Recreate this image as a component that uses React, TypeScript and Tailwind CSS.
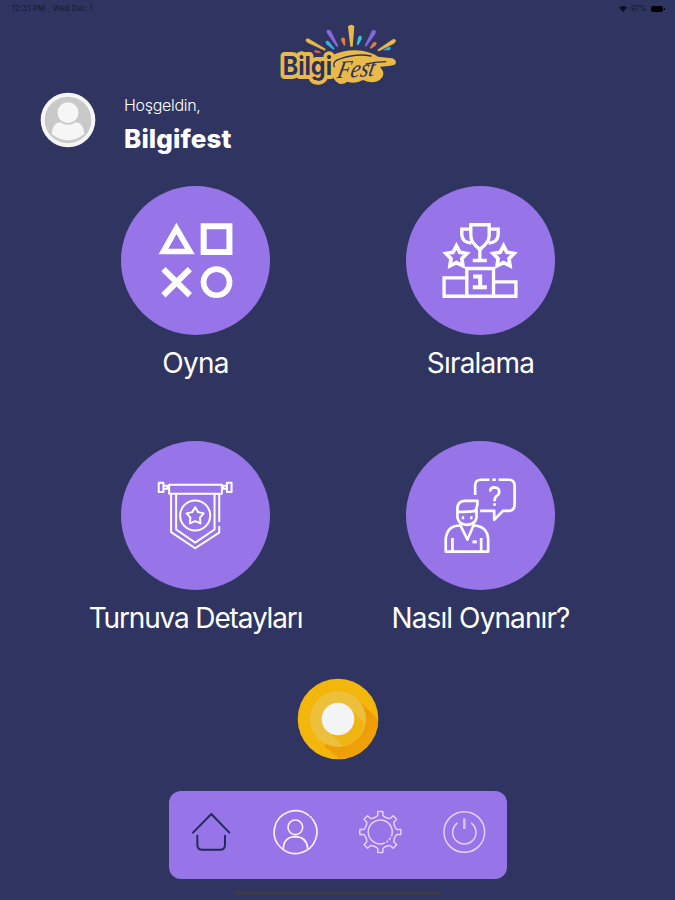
import type { ReactNode } from 'react';

const STAR = (cx: number, cy: number, outer: number, inner: number) =>
  Array.from({ length: 10 }, (_, i) => {
    const r = i % 2 === 0 ? outer : inner;
    const a = (Math.PI / 5) * i - Math.PI / 2;
    return `${(cx + r * Math.cos(a)).toFixed(1)},${(cy + r * Math.sin(a)).toFixed(1)}`;
  }).join(' ');

// Eight teeth, each one a flat top with slanted sides
const gearPath = (() => {
  const steps: [number, number][] = [[-16, 47], [-9, 50], [-7, 62], [7, 62], [9, 50], [16, 47]];
  const points: string[] = [];
  for (let t = 0; t < 8; t++) {
    for (const [deg, r] of steps) {
      const a = ((t * 45 + deg - 90) * Math.PI) / 180;
      points.push(`${(72 + r * Math.cos(a)).toFixed(1)} ${(72 + r * Math.sin(a)).toFixed(1)}`);
    }
  }
  return `M${points.join('L')}Z`;
})();

const Logo = () => (
  <svg className="h-[75px] w-[150px]" viewBox="0 0 450 225">
    {/* Fireworks */}
    <g>
      <path d="M123 76Q123 69 131 72L181 102L179 106L127 82Z" fill="#e9b949" stroke="#e9b949" strokeWidth="2" />
      <path d="M392 78Q391 70 383 74L338 105L341 108L387 85Z" fill="#e9b949" stroke="#e9b949" strokeWidth="2" />
      <path d="M249 34Q259 25 268 34L263 95H256Z" fill="#e9b949" />
      <path d="M184 48Q190 40 198 48L220 93L215 96L187 56Z" fill="#8667dc" />
      <path d="M333 48Q326 41 320 49L299 92L303 95L331 57Z" fill="#8667dc" />
      <path d="M181 80Q186 74 193 80L209 101L205 104L184 88Z" fill="#35aee2" />
      <path d="M290 64Q284 59 280 66L275 88L280 91L290 72Z" fill="#35c5d8" />
      <path d="M378 99Q374 94 366 98L354 106H374Z" fill="#35aee2" />
      <path d="M229 70Q235 64 240 71L241 91L237 92L229 77Z" fill="#e77b3b" />
      <path d="M335 83Q328 78 323 85L314 99L318 101L333 91Z" fill="#e77b3b" />
      <path d="M146 109Q151 102 163 109L169 115L153 113Z" fill="#db6546" />
    </g>
    <path
      d="M203 120Q240 102 292 107Q326 114 339 125L382 130Q397 136 391 148Q385 153 345 155Q366 179 344 195Q323 209 294 195Q271 208 247 200Q224 219 205 189Z"
      fill="#e9b949"
    />
    <text x="53" y="180" fontFamily="Inter, sans-serif" fontSize="75" fontWeight="700" textLength="148" lengthAdjust="spacingAndGlyphs"
      fill="#2b315f" stroke="#e9b949" strokeWidth="24" strokeLinejoin="round" paintOrder="stroke">Bilgi</text>
    <text transform="translate(214 190) rotate(-4) skewX(-16)" fontFamily="'Liberation Serif', serif" fontStyle="italic" fontSize="74"
      textLength="112" lengthAdjust="spacingAndGlyphs" fill="#2b315f">Fest</text>
    <path d="M208 155Q200 139 227 131Q276 114 318 123M304 147Q330 141 362 140" fill="none" stroke="#2b315f" strokeWidth="4" strokeLinecap="round" />
  </svg>
);

const PlayIcon = () => (
  <svg viewBox="19 18 446 446" className="size-full" fill="none" stroke="#fff">
    <path d="M185 145L225 214H146Z" strokeWidth="17" />
    <rect x="266.500" y="138.500" width="77" height="77" strokeWidth="18" />
    <path d="M146 267L225 345M225 267L146 345" strokeWidth="18" />
    <circle cx="305" cy="306" r="39" strokeWidth="17" />
  </svg>
);

const PodiumIcon = () => (
  <svg viewBox="19 18 446 446" className="size-full" fill="none" stroke="#fff" strokeWidth="10">
    <path d="M213 134H268V166Q268 188 240 207Q213 188 213 166Z" />
    <path d="M213 147H186V164Q187 187 215 189M268 147H295V164Q294 187 266 189" />
    <path d="M240 205V240M219 241H261" />
    <path d="M224 190L240 212L257 190" strokeWidth="7" />
    <polygon points={STAR(170, 230, 33, 17)} strokeWidth="11" />
    <polygon points={STAR(311, 230, 33, 17)} strokeWidth="11" />
    <path d="M201 265H281V348H201ZM201 293H133V348H201M281 305H348V348H281" />
    <path d="M220 289H241V320M219 321H261" strokeWidth="12" />
  </svg>
);

const BannerIcon = () => (
  <svg viewBox="124 18 446 446" className="size-full" fill="none" stroke="#fff" strokeWidth="6" strokeLinecap="round" strokeLinejoin="round">
    <path d="M268 149H426V176H268ZM300 176H405" />
    <path d="M237 143H251V171H237ZM441 143H455V171H441ZM251 152H263V161H251M441 152H430V161H441" />
    <path d="M274 177V291L346 339L418 292V275M418 258V177" />
    <path d="M289 177V283L346 322L404 283V177" />
    <circle cx="346" cy="241" r="45" />
    <polygon points={STAR(346, 243, 27, 15)} />
  </svg>
);

const HelpIcon = () => (
  <svg viewBox="78 18 446 446" className="size-full" fill="none" stroke="#fff" strokeWidth="8" strokeLinejoin="round">
    <path d="M285 180V150Q286 134 302 134H328M336 134H347M355 134H386Q403 135 403 151V210Q402 226 387 227H368L342 254V227H300" />
    <path d="M330 169Q330 157 343 157Q357 158 357 170Q357 178 350 182Q343 186 343 198M343 204V212" />
    <path d="M232 232V222Q231 198 254 197H292Q293 213 286 227Q270 230 250 230H232M232 230V247Q235 268 261 269Q287 267 289 247V224" />
    <path d="M245 248H252M270 248H277" strokeWidth="9" />
    <path d="M241 262V271Q202 270 197 310V349H324V312Q321 272 280 271V262M241 271L262 313L280 271" />
    <path d="M217 348V308M303 348V308" />
    <path d="M277 320H290" strokeWidth="9" />
  </svg>
);

const Coin = () => (
  <svg className="size-[82px]" viewBox="0 0 246 246">
    <defs>
      <clipPath id="coin"><circle cx="123" cy="123" r="121" /></clipPath>
      <linearGradient id="shade" x1="0.3" y1="0.2" x2="0.8" y2="0.9">
        <stop offset="0.3" stopColor="#ee9a08" />
        <stop offset="1" stopColor="#f1a407" />
      </linearGradient>
    </defs>
    <circle cx="123" cy="123" r="121" fill="#f3b70b" />
    <g clipPath="url(#coin)">
      <path d="M182 64L260 142V260H150L82 205Z" fill="url(#shade)" />
    </g>
    <circle cx="123" cy="123" r="84" fill="#edc03b" />
    <path d="M157 89L203 136A84 84 0 0 1 140 205L89 157Z" fill="#f0b413" />
    <circle cx="123" cy="123" r="49" fill="#f3f4f6" />
  </svg>
);

const NavIcon = ({ color, width = 4.5, children }: { color: string; width?: number; children: ReactNode }) => (
  <svg className="size-12" viewBox="-1 0 144 144" fill="none" stroke={color} strokeWidth={width} strokeLinecap="round" strokeLinejoin="round">
    {children}
  </svg>
);

const menu = [
  { label: 'Oyna', icon: <PlayIcon />, spacing: 'tracking-[-0.7px]' },
  { label: 'Sıralama', icon: <PodiumIcon />, spacing: 'tracking-[-0.8px]' },
  { label: 'Turnuva Detayları', icon: <BannerIcon />, spacing: 'tracking-[-1.15px]' },
  { label: 'Nasıl Oynanır?', icon: <HelpIcon />, spacing: 'tracking-[-0.9px]' },
];

const App = () => {
  return (
    <div className="flex h-[900px] w-[675px] flex-col overflow-hidden bg-[#2f3560] font-['Inter',sans-serif] text-white">
      {/* Status bar */}
      <div className="flex h-[15px] items-center justify-between pr-2.5 pl-3 pt-0.5 text-[7.5px] leading-none text-[#141832]">
        <div className="flex gap-2">
          <span className="tracking-[0.25px]">12:31 PM</span>
          <span className="tracking-[0.25px]">Wed Dec 1</span>
        </div>
        <div className="flex items-center gap-1">
          <svg className="h-1.5 w-2" viewBox="0 0 16 12" fill="#0c0e20"><path d="M0 3Q8 -3 16 3L8 12Z" /></svg>
          <span>97%</span>
          <div className="flex items-center gap-px">
            <div className="h-1.5 w-3 rounded-xs bg-black"></div>
            <div className="h-0.5 w-px bg-black"></div>
          </div>
        </div>
      </div>

      <div className="flex justify-center pl-[5px]">
        <Logo />
      </div>

      {/* Welcome */}
      <div className="flex h-[60px] items-center gap-7 pl-10">
        <div className="size-14 rounded-full">
          <svg viewBox="0 0 168 168" className="size-full">
            <circle cx="84" cy="84" r="82" fill="#f6f6f6" />
            <circle cx="84" cy="84" r="70" fill="#c9c9c9" />
            <path d="M35 126Q37 95 60 90H108Q131 95 133 126Q84 164 35 126Z" fill="#f6f6f6" />
            <circle cx="84" cy="62" r="34" fill="#f6f6f6" stroke="#c9c9c9" strokeWidth="5" />
          </svg>
        </div>
        <div className="flex flex-col pt-2.5">
          <span className="text-[16px] leading-5 font-light tracking-[-0.3px]">Hoşgeldin,</span>
          <span className="mt-2 text-[26px] leading-8 font-extrabold tracking-[0.1px]">Bilgifest</span>
        </div>
      </div>

      {/* Menu */}
      <div className="mt-9 grid grid-cols-2 pr-[52px] pl-[53px]">
        {menu.map((item) => (
          <div key={item.label} className="flex h-[255px] flex-col items-center">
            <div className="size-[149px] shrink-0 rounded-full bg-[#9775e9]">{item.icon}</div>
            <span className={`mt-2.5 text-[28px] leading-9 whitespace-nowrap ${item.spacing}`}>{item.label}</span>
          </div>
        ))}
      </div>

      <div className="-mt-[18px] flex shrink-0 justify-center">
        <Coin />
      </div>

      {/* Bottom navigation */}
      <div className="mt-[31px] flex justify-center">
        <nav className="grid h-[88px] w-[338px] grid-cols-4 place-items-center rounded-xl bg-[#9775e9] pb-1.5">
          <NavIcon color="#222a5c" width={6}>
            <path d="M17 74L72 18L126 74M30 83V110Q30 125 45 125H98Q113 125 113 110V83" />
          </NavIcon>
          <NavIcon color="#fbeeff" width={5}>
            <path d="M112 22A64 64 0 1 0 123 33M117 26L119 28" />
            <circle cx="72" cy="58" r="22" />
            <path d="M36 122Q37 87 72 86Q107 87 109 122" />
          </NavIcon>
          <NavIcon color="#e6d0fa">
            <path d={gearPath} />
            <path d="M84 105Q79 108 72 108A36 36 0 1 1 106 83M91 102L94 99M99 94L102 90" />
          </NavIcon>
          <NavIcon color="#e6d0fa">
            <circle cx="72" cy="72" r="61" />
            <path d="M50 46A35 35 0 1 0 94 46" />
            <path d="M72 31V63" strokeWidth="8" strokeLinecap="butt" stroke="#d6bcf5" />
          </NavIcon>
        </nav>
      </div>

      <div className="mt-3 flex justify-center">
        <div className="h-1 w-52 rounded-full bg-[#3b3a48]"></div>
      </div>
    </div>
  );
};

export default App;
